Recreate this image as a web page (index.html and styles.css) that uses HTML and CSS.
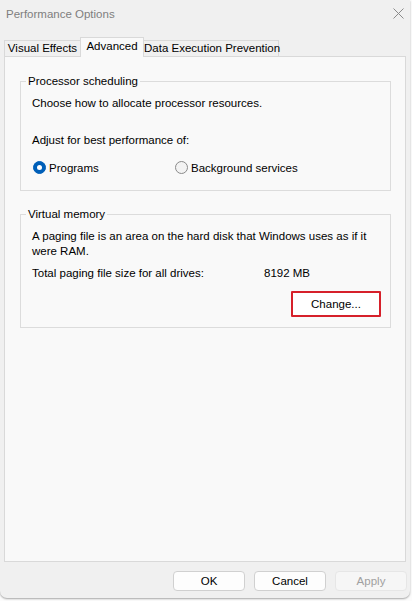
FILE: index.html
```html
<!DOCTYPE html>
<html lang="en">
<head>
<meta charset="utf-8">
<title>Performance Options</title>
<link rel="stylesheet" href="styles.css">
</head>
<body>
<div class="window">
  <div class="titlebar">
    <span class="title">Performance Options</span>
    <span class="close" aria-label="Close">
      <svg width="11" height="11" viewBox="0 0 11 11"><path d="M0.5 0.5 L10.5 10.5 M10.5 0.5 L0.5 10.5" stroke="#8a8a8a" stroke-width="1" fill="none"/></svg>
    </span>
  </div>
  <div class="tabs">
    <div class="tab tab-visual">Visual Effects</div>
    <div class="tab tab-advanced active">Advanced</div>
    <div class="tab tab-dep">Data Execution Prevention</div>
  </div>
  <div class="panel">
    <fieldset class="group group-proc">
      <legend>Processor scheduling</legend>
      <p class="line first">Choose how to allocate processor resources.</p>
      <p class="line adjust">Adjust for best performance of:</p>
      <div class="radios">
        <div class="option option-wide"><span class="radio checked"></span><span>Programs</span></div>
        <div class="option"><span class="radio"></span><span>Background services</span></div>
      </div>
    </fieldset>
    <fieldset class="group group-vm">
      <legend>Virtual memory</legend>
      <p class="line first">A paging file is an area on the hard disk that Windows uses as if it<br>were RAM.</p>
      <div class="total">
        <span>Total paging file size for all drives:</span>
        <span>8192 MB</span>
      </div>
      <div class="change-row">
        <button class="btn change">Change...</button>
      </div>
    </fieldset>
  </div>
  <div class="actions">
    <button class="btn">OK</button>
    <button class="btn">Cancel</button>
    <button class="btn disabled">Apply</button>
  </div>
</div>
</body>
</html>
```

FILE: styles.css
```css
* { box-sizing: border-box; }
html, body { margin: 0; padding: 0; }
body {
  background: #fcfcfc;
  font-family: "Liberation Sans", Arial, sans-serif;
  font-size: 11.5px;
  color: #000;
  width: 412px;
  height: 601px;
  overflow: hidden;
}
.window {
  width: 410px;
  height: 598px;
  background: #f0f0f0;
  border-radius: 0 0 7px 7px;
  box-shadow: 0 1px 2px rgba(0,0,0,0.35);
  display: flex;
  flex-direction: column;
}
.titlebar {
  height: 28px;
  display: flex;
  align-items: center;
  justify-content: space-between;
  padding: 0 6px 0 6px;
}
.title {
  color: #7e7e7e;
  font-size: 11.5px;
}
.close {
  display: flex;
  margin-top: -1px;
}
.tabs {
  height: 28px;
  display: flex;
  align-items: flex-end;
  padding-left: 4px;
}
.tab {
  height: 16px;
  line-height: 15px;
  border: 1px solid #d9d9d9;
  border-bottom: none;
  background: #f0f0f0;
  text-align: center;
  white-space: nowrap;
  color: #000;
}
.tab-visual { width: 77px; }
.tab-advanced { width: 64px; margin-left: -1px; }
.tab-dep { width: 136px; margin-left: -1px; }
.tab.active {
  height: 20px;
  background: #f9f9f9;
  position: relative;
  z-index: 1;
  margin-bottom: -1px;
  line-height: 17px;
}
.panel {
  margin: 0 4px;
  height: 506px;
  background: #f9f9f9;
  border: 1px solid #d9d9d9;
  padding: 17px 14px 0 15px;
}
.group {
  margin: 0;
  border: 1px solid #dcdcdc;
  padding: 0 0 0 11px;
  min-width: 0;
}
.group legend {
  padding: 0 2px;
  margin-left: -6px;
  line-height: 14px;
  height: 14px;
}
.group-proc { padding-bottom: 15px; }
.group-vm { margin-top: 16px; padding-bottom: 10px; }
.line {
  margin: 0;
  line-height: 15px;
}
.line.first { margin-top: 8px; }
.line.adjust { margin-top: 22px; }
.radios {
  display: flex;
  margin-top: 12px;
  height: 15px;
  align-items: center;
}
.option {
  display: flex;
  align-items: center;
  gap: 3px;
}
.option-wide { width: 143px; padding-left: 1px; }
.radio {
  width: 13px;
  height: 13px;
  border-radius: 50%;
  border: 1px solid #8a8a8a;
  background: #f3f3f3;
  position: relative;
  flex: none;
}
.radio.checked {
  border-color: #005fb8;
  background: #005fb8;
}
.radio.checked::after {
  content: "";
  position: absolute;
  left: 3px;
  top: 3px;
  width: 5px;
  height: 5px;
  border-radius: 50%;
  background: #fff;
}
.total {
  display: grid;
  grid-template-columns: 232px auto;
  margin-top: 7px;
  line-height: 15px;
}
.change-row {
  display: flex;
  justify-content: flex-end;
  margin-top: 10px;
  padding-right: 9px;
}
.btn {
  font-family: "Liberation Sans", Arial, sans-serif;
  font-size: 11.5px;
  color: #000;
  background: #fdfdfd;
  border: 1px solid #d0d0d0;
  border-radius: 4px;
  width: 72px;
  height: 20px;
  padding: 0;
  margin: 0;
}
.btn.change {
  width: 90px;
  height: 26px;
  border: 2px solid #d6202a;
  border-radius: 1px;
  background: #fff;
}
.btn.disabled {
  background: #f6f6f6;
  border-color: #e6e6e6;
  color: #a0a0a0;
}
.actions {
  display: flex;
  justify-content: flex-end;
  gap: 9px;
  margin-top: 9px;
  padding-right: 3px;
}
```
